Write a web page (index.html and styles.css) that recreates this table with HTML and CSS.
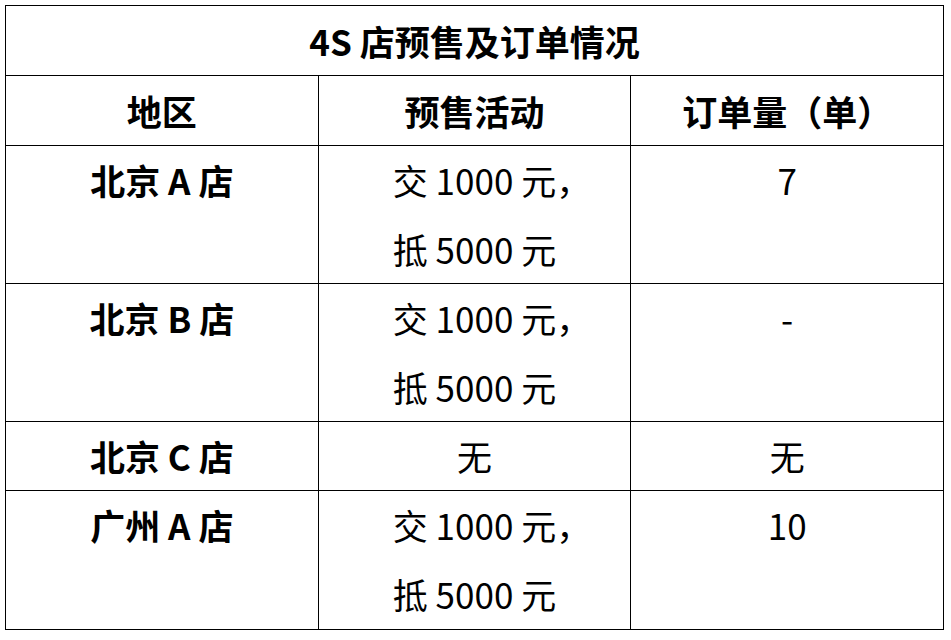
FILE: index.html
```html
<!DOCTYPE html>
<html lang="zh-CN">
<head>
<meta charset="utf-8">
<link rel="stylesheet" href="styles.css">
</head>
<body>
<table class="sheet">
  <colgroup><col class="c"><col class="c"><col class="c"></colgroup>
  <tr><th class="title" colspan="3">4S 店预售及订单情况</th></tr>
  <tr><th>地区</th><th>预售活动</th><th>订单量（单）</th></tr>
  <tr><td class="name">北京 A 店</td><td>交 1000 元<span class="hang">，</span><br>抵 5000 元</td><td>7</td></tr>
  <tr><td class="name">北京 B 店</td><td>交 1000 元<span class="hang">，</span><br>抵 5000 元</td><td>-</td></tr>
  <tr class="short"><td class="name">北京 C 店</td><td>无</td><td>无</td></tr>
  <tr><td class="name">广州 A 店</td><td>交 1000 元<span class="hang">，</span><br>抵 5000 元</td><td>10</td></tr>
</table>
</body>
</html>
```
FILE: styles.css
```css
html, body {
  margin: 0;
  background: #fff;
}
body {
  padding: 5px;
  font-family: "Noto Sans CJK SC", "Noto Sans", sans-serif;
  color: #000;
}
.sheet {
  border-collapse: collapse;
  width: 939px;
  table-layout: fixed;
}
.sheet col.c { width: 33.333%; }
.sheet th, .sheet td {
  border: 1px solid #000;
  padding: 0 20px;
  font-size: 35px;
  line-height: 68.6px;
  text-align: center;
  vertical-align: top;
}
.sheet th { font-weight: 700; line-height: 69px; }
.sheet td { font-weight: 400; }
.sheet td.name { font-weight: 700; }
.sheet .short td { line-height: 68px; }
.hang { margin-right: -1em; }
```
